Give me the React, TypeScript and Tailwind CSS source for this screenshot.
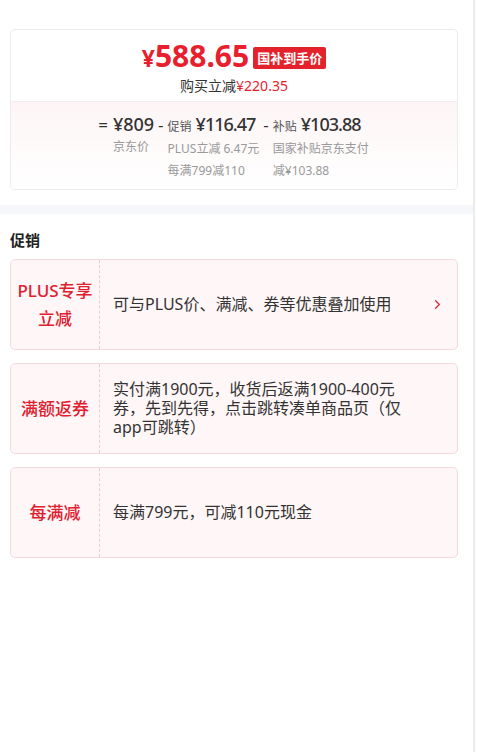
import { ChevronRight } from 'lucide-react';

const promos = [
  { tag: ['PLUS专享', '立减'], text: '可与PLUS价、满减、券等优惠叠加使用', arrow: true },
  { tag: ['满额返券'], text: '实付满1900元，收货后返满1900-400元券，先到先得，点击跳转凑单商品页（仅app可跳转）', arrow: false },
  { tag: ['每满减'], text: '每满799元，可减110元现金', arrow: false },
];

export default function App() {
  return (
    <div
      className="flex min-h-[752px] bg-white"
      style={{ fontFamily: '"Noto Sans", "Noto Sans CJK SC", sans-serif' }}
    >
      <main className="w-[475px] border-r-2 border-[#ebebeb] pt-[29px]">
        <section className="ml-[10px] w-[448px] rounded-[5px] border border-[#ececec] overflow-hidden">
          <div className="flex flex-col items-center pt-[12px] pb-[5px]">
            <div className="flex h-[32px] items-center gap-[4px]">
              <span className="font-bold text-[#e8202e] leading-[32px]">
                <span className="text-[23px]">¥</span>
                <span className="text-[30px]">588.65</span>
              </span>
              <span className="rounded-[2px] bg-[#e4222c] px-[4px] py-[1px] text-[13px] font-bold leading-[20px] text-white">
                国补到手价
              </span>
            </div>
            <div className="mt-[2px] text-[14px] leading-[20px] text-[#333]">
              购买立减<span className="text-[#e8202e]">¥220.35</span>
            </div>
          </div>
          <div className="flex justify-center gap-[4px] border-t border-[#f3eeee] bg-gradient-to-b from-[#fdf5f5] to-white pt-[11px] pb-[7px] text-[#333]">
            <div className="flex gap-[5px]">
              <span className="text-[17px] leading-[23px]">=</span>
              <div>
                <div className="text-[18px] font-medium leading-[23px]">¥809</div>
                <div className="text-[12px] leading-[22px] text-[#999]">京东价</div>
              </div>
            </div>
            <div className="flex gap-[4px]">
              <span className="text-[17px] leading-[23px]">-</span>
              <div>
                <div className="whitespace-nowrap text-[18px] font-medium leading-[23px]">
                  <span className="mr-[4px] text-[12px] font-normal text-[#555]">促销</span>
                  <span className="tracking-[-1px]">¥116.47</span>
                </div>
                <div className="text-[12px] leading-[22px] text-[#999]">
                  <div>PLUS立减 6.47元</div>
                  <div>每满799减110</div>
                </div>
              </div>
            </div>
            <div className="flex gap-[4px]">
              <span className="text-[17px] leading-[23px]">-</span>
              <div className="w-[97px]">
                <div className="whitespace-nowrap text-[18px] font-medium leading-[23px]">
                  <span className="mr-[4px] text-[12px] font-normal text-[#555]">补贴</span>
                  <span className="tracking-[-1px]">¥103.88</span>
                </div>
                <div className="text-[12px] leading-[22px] text-[#999]">国家补贴京东支付减¥103.88</div>
              </div>
            </div>
          </div>
        </section>

        <div className="mt-[15px] h-[9px] bg-[#f5f7fa]" />

        <h2 className="mx-[10px] mt-[15px] text-[15px] font-bold leading-[22px] text-[#222]">促销</h2>

        <div className="ml-[10px] mt-[8px] flex w-[448px] flex-col gap-[13px]">
          {promos.map((p) => (
            <div
              key={p.text}
              className="flex h-[91px] rounded-[5px] border border-[#f3d9dc] bg-[#fff6f7]"
            >
              <div className="flex w-[89px] shrink-0 flex-col items-center justify-center border-r border-dashed border-[#e9cdd1] text-[17px] font-medium leading-[28px] text-[#e0202f]">
                {p.tag.map((t) => (
                  <span key={t}>{t}</span>
                ))}
              </div>
              <div className="flex flex-1 items-center pl-[13px] pr-[12px]">
                <p className="w-[292px] text-[16px] leading-[19px] text-[#333]">{p.text}</p>
                {p.arrow && (
                  <ChevronRight className="ml-auto h-[15px] w-[15px] text-[#d8283a]" strokeWidth={2} />
                )}
              </div>
            </div>
          ))}
        </div>
      </main>
    </div>
  );
}
